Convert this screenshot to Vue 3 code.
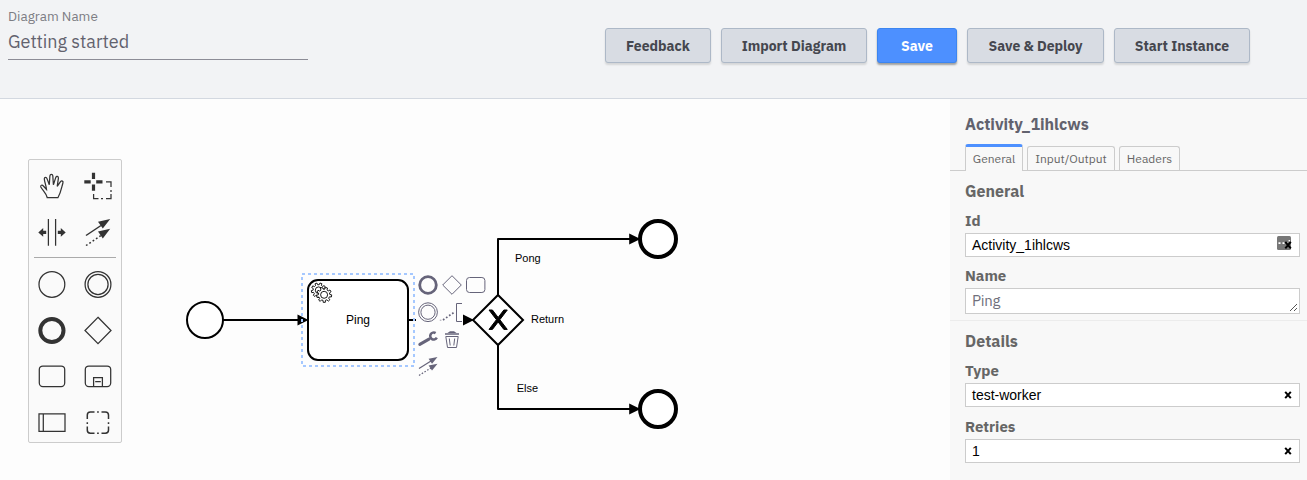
<script setup>
const buttons = [
  { label: 'Feedback', cls: 'w106' },
  { label: 'Import Diagram', cls: 'w146' },
  { label: 'Save', cls: 'w80 primary' },
  { label: 'Save & Deploy', cls: 'w137' },
  { label: 'Start Instance', cls: 'w136' },
]

function gear(cx, cy, inner, outer, teeth = 9) {
  const pts = []
  const step = (Math.PI * 2) / teeth
  for (let i = 0; i < teeth; i++) {
    const a = i * step + 0.15
    for (const [k, r] of [[-0.3, inner], [-0.2, outer], [0.2, outer], [0.3, inner]]) {
      pts.push(`${(cx + r * Math.cos(a + k * step)).toFixed(2)},${(cy + r * Math.sin(a + k * step)).toFixed(2)}`)
    }
  }
  return pts.join(' ')
}
const backGear = gear(318.6, 290.2, 5.5, 7.3)
const frontGear = gear(324.1, 294.8, 5.7, 7.6)
</script>

<template>
  <div class="app">
    <header class="top">
      <div class="name-field">
        <div class="caption">Diagram Name</div>
        <div class="value">Getting started</div>
      </div>
      <div class="actions">
        <button v-for="b in buttons" :key="b.label" class="btn" :class="b.cls">{{ b.label }}</button>
      </div>
    </header>

    <main class="body">
      <section class="canvas">
        <svg class="diagram" width="950" height="381" viewBox="0 99 950 381">
          <g fill="none" stroke="#000" stroke-width="2">
            <path d="M223 320H303" />
            <path d="M408 320H416" />
            <path d="M498 295V239H634" stroke-linejoin="round" />
            <path d="M498 345V409H634" stroke-linejoin="round" />
          </g>
          <g fill="#fff" stroke="#000" stroke-width="2">
            <circle cx="205" cy="320" r="18" />
            <rect x="308" y="280" width="100" height="80" rx="10" />
            <path d="M498 295L523 320L498 345L473 320Z" />
            <circle cx="658" cy="239" r="18" stroke-width="4" />
            <circle cx="658" cy="409" r="18" stroke-width="4" />
          </g>
          <g fill="#000">
            <path d="M297.5 314.5L308.5 320L297.5 325.5Z" />
            <path d="M463 314.5L474 320L463 325.5Z" />
            <path d="M629.2 233.5L640.5 239L629.2 244.5Z" />
            <path d="M629.2 403.5L640.5 409L629.2 414.5Z" />
          </g>
          <path
            d="m489,310 7.43,9.71 -7.43,9.71 3.43,0 5.71,-7.46 5.71,7.46 3.43,0 -7.43,-9.71 7.43,-9.71 -3.43,0 -5.71,7.46 -5.71,-7.46z"
            fill="#000" stroke="#000"
          />
          <g fill="#fff" stroke="#000" stroke-width=".9">
            <polygon :points="backGear" />
            <circle cx="318.6" cy="290.2" r="3.3" />
            <polygon :points="frontGear" />
            <circle cx="324.1" cy="294.8" r="3.5" />
          </g>
          <rect class="selection" x="302" y="274" width="112" height="92" />
          <g class="labels">
            <text x="358" y="324" text-anchor="middle" font-size="12">Ping</text>
            <text x="515" y="262">Pong</text>
            <text x="531" y="323">Return</text>
            <text x="516.7" y="392">Else</text>
          </g>

          <!-- context pad -->
          <g fill="none" stroke="#66647a" stroke-width="1">
            <circle cx="428" cy="285" r="8.3" stroke-width="2.8" />
            <path d="M452 275.7L461.3 285L452 294.3L442.7 285Z" />
            <rect x="466.5" y="277.5" width="18.4" height="15" rx="3" />
            <circle cx="428" cy="312.2" r="9.4" />
            <circle cx="428" cy="312.2" r="7.1" />
            <path d="M462 303.5H456.5V321.5H462" />
            <path d="M443 320L455 311.7" stroke-width="1.7" stroke-dasharray="1.7 2" />
            <path d="M439.8 320.2H441.4" opacity=".6" />
            <path d="M419.8 344.4L429 339.1" stroke-width="3" stroke-linecap="round" />
            <path d="M435.6 333.1A3.5 3.5 0 1 0 436.8 337.7" stroke-width="2.5" />
            <path d="M445.8 336.5L447.5 347.5H456.5L458.2 336.5Z" />
            <path d="M449.3 338.5L450.2 345.5M454.7 338.5L453.8 345.5" />
            <path d="M445 334H459" stroke-width="1.5" />
            <path d="M447.5 333L450 331.3H454L456.5 333Z" fill="#66647a" stroke="none" />
            <path d="M419 368.5L431 361" stroke-width="1.2" />
            <path d="M419 375.4L431 368" stroke-width="1.2" stroke-dasharray="1.6 1.6" />
            <path d="M437.5 357L428.6 358.8L432 363.8Z" fill="#66647a" stroke="none" />
            <path d="M437.5 363.7L428.6 365.5L432 370.5Z" fill="#66647a" stroke="none" />
          </g>
        </svg>

        <aside class="palette">
          <div class="tools">
            <svg viewBox="29 160 46 46">
              <path d="M47.2 197.5C46.2 193.2 42.6 190.4 40.8 187C40.2 185.2 42.2 184.5 43.4 186L46.5 189.5C46.2 185.5 44.4 181.7 44.3 178.7C44.4 176.8 46.5 176.8 47 178.6L49.3 184.8L49.9 175.8C50.2 173.9 52.6 173.9 52.8 175.8L53.4 184.8L55.8 177.4C56.5 175.6 58.7 176.3 58.4 178.3L57.2 186.4L60.5 181.6C61.7 180.2 63.6 181.2 62.9 183C61.5 187.5 61.2 192 58 197.5Z" />
            </svg>
            <svg viewBox="75 160 46 46">
              <path d="M93.5 172.7V179M93.5 184.5V190.7M84.3 181.8H90.7M96.2 181.8H102.5" stroke-width="3.2" />
              <path d="M106 181.8H111V187M111 190V192M111 194V198.5H106M103 198.5H101M98.5 198.5H93.6V194" />
            </svg>
            <svg viewBox="29 206 46 46">
              <path d="M48.4 219V245.7M55.6 219V245.7" />
              <path d="M38.3 232.4L43.2 228V230.8H46.2V234H43.2V236.8ZM65.7 232.4L60.8 228V230.8H57.8V234H60.8V236.8Z" class="solid" />
            </svg>
            <svg viewBox="75 206 46 46">
              <path d="M86 235.5L101 225.5" stroke-width="1.5" />
              <path d="M86 245.5L101 235.5" stroke-width="1.5" stroke-dasharray="1.8 2.2" />
              <path d="M110.2 219L98 221.8L102.8 228.4ZM110.2 228.8L98 231.6L102.8 238.4Z" class="solid" />
            </svg>
          </div>
          <hr class="separator" />
          <div class="tools">
            <svg viewBox="29 258 46 46"><circle cx="51.9" cy="284.4" r="12.9" /></svg>
            <svg viewBox="75 258 46 46">
              <circle cx="98" cy="284.4" r="12.9" /><circle cx="98" cy="284.4" r="10.1" />
            </svg>
            <svg viewBox="29 304 46 46"><circle cx="51.9" cy="330.5" r="11.6" stroke-width="4" /></svg>
            <svg viewBox="75 304 46 46"><path d="M98 317.3L111 330.5L98 343.6L85 330.5Z" /></svg>
            <svg viewBox="29 350 46 46"><rect x="39.3" y="366" width="25.4" height="20.6" rx="3.5" /></svg>
            <svg viewBox="75 350 46 46">
              <rect x="85.3" y="366" width="25.4" height="20.6" rx="3.5" />
              <path d="M93.6 386.5V377.6H102.4V386.5M95.2 381.7H100.8" />
            </svg>
            <svg viewBox="29 396 46 46"><path d="M39 413.9H65V431.3H39ZM43.3 414V431" /></svg>
            <svg viewBox="75 396 46 46">
              <path d="M87.3 419V415Q87.3 411.9 90.4 411.9H94.5M101.5 411.9H105.3Q108.5 411.9 108.5 415V419M108.5 426.5V430.3Q108.5 433.2 105.3 433.2H101.5M94.5 433.2H90.4Q87.3 433.2 87.3 430.3V426.5" stroke-width="1.5" />
              <path d="M97.1 411.9H98.8M97.1 433.2H98.8M87.3 422.2V423.9M108.5 422.2V423.9" stroke-width="1.5" />
            </svg>
          </div>
        </aside>
      </section>

      <aside class="panel">
        <div class="title">Activity_1ihlcws</div>
        <nav class="tabs">
          <div class="tab active w58">General</div>
          <div class="tab w88">Input/Output</div>
          <div class="tab w61">Headers</div>
        </nav>
        <section class="group first">
          <h3>General</h3>
          <label>Id</label>
          <div class="input">
            <span>Activity_1ihlcws</span>
            <svg class="badge" width="24" height="22" viewBox="1275 234 24 22">
              <rect x="1277" y="236" width="14" height="14" rx="1.5" fill="#777" />
              <path d="M1278.5 242.2H1280.5V244H1278.5ZM1282.5 242.2H1284.5V244H1282.5ZM1286.5 242.2H1287.5V244H1286.5ZM1288.6 240H1290V241.6H1288.6Z" fill="#fff" />
              <path d="M1285.3 241.9L1290.8 248.3M1290.8 241.9L1285.3 248.3" fill="none" stroke="#000" stroke-width="2" />
            </svg>
          </div>
          <label class="name">Name</label>
          <div class="input area">
            <span>Ping</span>
            <svg class="grip" width="9" height="9" viewBox="0 0 9 9"><path d="M1 8L8 1M5 8L8 5" /></svg>
          </div>
        </section>
        <section class="group">
          <h3>Details</h3>
          <label>Type</label>
          <div class="input">
            <span>test-worker</span>
            <svg class="clear" width="8" height="8" viewBox="0 0 8 8"><path d="M1.2 .8L6.8 7.2M6.8 .8L1.2 7.2" /></svg>
          </div>
          <label>Retries</label>
          <div class="input">
            <span>1</span>
            <svg class="clear" width="8" height="8" viewBox="0 0 8 8"><path d="M1.2 .8L6.8 7.2M6.8 .8L1.2 7.2" /></svg>
          </div>
        </section>
      </aside>
    </main>
  </div>
</template>

<style>
body { margin: 0; overflow: hidden; }
</style>

<style scoped>
* { box-sizing: border-box; }
.app {
  width: 1307px; height: 480px; display: flex; flex-direction: column; overflow: hidden;
  font-family: "IBM Plex Sans", Roboto, "Noto Sans", sans-serif; background: #fdfdfd;
}
.top {
  height: 99px; flex: none; display: flex; justify-content: space-between; align-items: flex-start;
  padding: 0 57px 0 8px; background: #f2f3f5; border-bottom: 1px solid #d3d8e0;
}
.name-field { width: 300px; height: 60px; border-bottom: 1px solid #8c8c96; padding-top: 6px; }
.caption { font-size: 13.5px; line-height: 20px; color: #7d7d84; }
.value { font-size: 18px; line-height: 24px; margin-top: 4px; color: #62626e; }
.actions { display: flex; gap: 10px; padding-top: 28px; }
.btn {
  height: 35px; padding: 1px 0 0; border: 1px solid #adb8c7; border-radius: 3px; background: #d8dce3;
  color: #45474f; font: 700 14px/32px "IBM Plex Sans", Roboto, "Noto Sans", sans-serif;
  text-align: center; box-shadow: 0 2px 2px rgba(0, 0, 0, .12);
}
.btn.primary { background: #4d90ff; border-color: #3c85f0; color: #fff; box-shadow: 0 2px 2px rgba(0, 0, 0, .35); }
.w106 { width: 106px; } .w146 { width: 146px; } .w80 { width: 80px; }
.w137 { width: 137px; } .w136 { width: 136px; }

.body { flex: 1; display: flex; min-height: 0; }
.canvas { width: 950px; position: relative; background: #fdfdfd; }
.diagram { display: block; }
.selection { fill: none; stroke: #a5c8ff; stroke-width: 2; stroke-dasharray: 3 3; }
.labels { font-family: "Liberation Sans", Arial, sans-serif; font-size: 11px; fill: #000; }
.palette {
  position: absolute; left: 28px; top: 60px; width: 94px; height: 284px;
  border: 1px solid #ccc; border-radius: 2px; background: #fafafa;
}
.tools { display: grid; grid-template-columns: 46px 46px; }
.tools svg { width: 46px; height: 46px; display: block; fill: none; stroke: #333; stroke-width: 1.25; }
.tools .solid { fill: #333; stroke: none; }
.separator { height: 1px; border: 0; margin: 5px 5px 0; background: #aaa; }

.panel { width: 357px; background: #f8f8f8; color: #666; }
.title { padding: 15px 0 0 15px; font-size: 16px; font-weight: 700; line-height: 20px; color: #62626e; }
.tabs {
  display: flex; gap: 4px; align-items: flex-end; height: 27px; margin-top: 10px; padding-left: 15px;
  box-shadow: inset 0 -1px #ccc;
}
.tab {
  height: 25px; border: 1px solid #ccc; border-bottom: 0; border-radius: 3px 3px 0 0; font-size: 12px; line-height: 24px;
  text-align: center; background: #f8f8f8; box-shadow: inset 0 -1px #ccc;
}
.tab.active { height: 27px; border-top: 3px solid #4d90ff; box-shadow: none; }
.w58 { width: 58px; } .w88 { width: 88px; } .w61 { width: 61px; }
.group { padding: 10px 7px 0 15px; border-top: 1px solid #ececec; }
.group.first { height: 149px; border-top: 0; }
h3 { margin: 0; font-size: 16px; line-height: 20px; font-weight: 700; }
label { display: block; margin-top: 10px; height: 20px; font-size: 15px; line-height: 20px; font-weight: 700; }
label.name { margin-top: 9px; }
.input {
  height: 24px; margin-top: 2px; padding: 0 7px 0 6px; display: flex; justify-content: space-between; align-items: center;
  border: 1px solid #ccc; background: #fff; color: #000;
  font: 14px/22px "Liberation Sans", Arial, sans-serif;
}
.area { height: 26px; padding-right: 1px; font: 15px/24px "IBM Plex Sans", Roboto, sans-serif; letter-spacing: -.3px; color: #70707c; }
.clear { fill: none; stroke: #000; stroke-width: 2; }
.badge { margin-right: -7px; }
.grip { align-self: flex-end; margin-bottom: 1px; fill: none; stroke: #555; stroke-width: 1; }
</style>
